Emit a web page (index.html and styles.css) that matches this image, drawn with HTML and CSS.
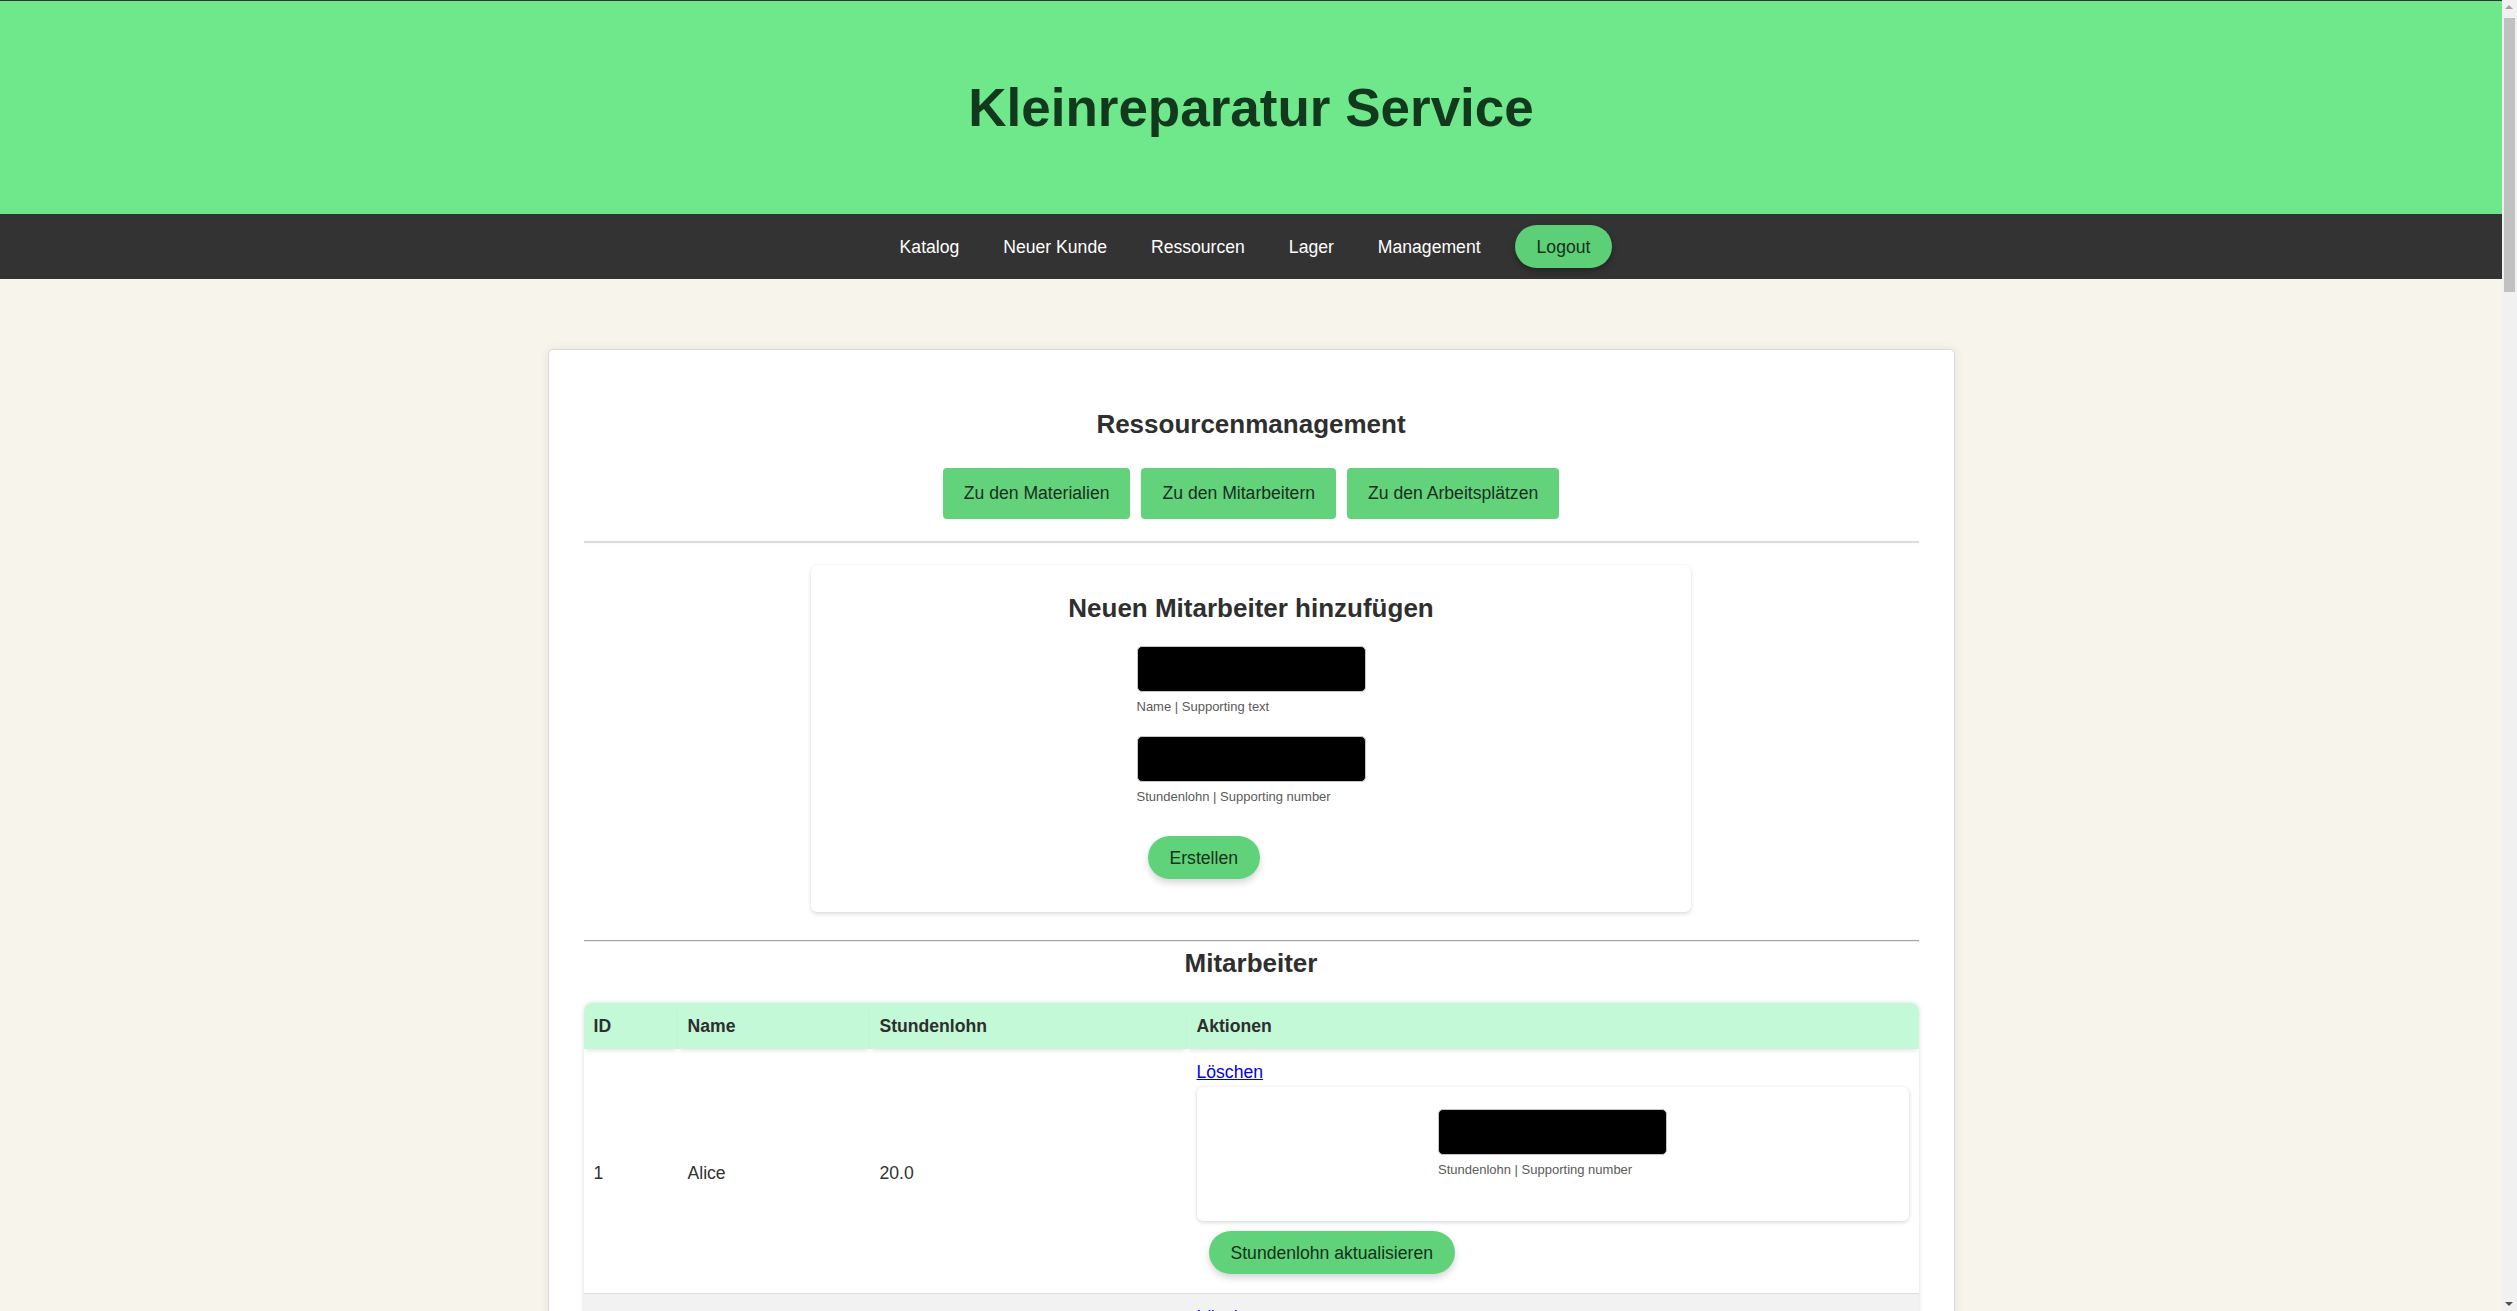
FILE: index.html
```html
<!DOCTYPE html>
<html lang="de">
<head>
<meta charset="utf-8">
<title>Kleinreparatur Service – Ressourcen</title>
<link rel="stylesheet" href="styles.css">
</head>
<body>
<div class="viewport">
  <header class="site-header">
    <h1 class="site-title">Kleinreparatur Service</h1>
  </header>
  <nav class="main-nav">
    <a class="nav-link" href="#">Katalog</a>
    <a class="nav-link" href="#">Neuer Kunde</a>
    <a class="nav-link" href="#">Ressourcen</a>
    <a class="nav-link" href="#">Lager</a>
    <a class="nav-link" href="#">Management</a>
    <button class="btn-pill nav-logout" type="button">Logout</button>
  </nav>
  <main class="page">
    <section class="card">
      <h2 class="card-title">Ressourcenmanagement</h2>
      <div class="tab-buttons">
        <a class="btn-tab" href="#">Zu den Materialien</a>
        <a class="btn-tab" href="#">Zu den Mitarbeitern</a>
        <a class="btn-tab" href="#">Zu den Arbeitsplätzen</a>
      </div>
      <hr class="soft-rule">
      <div class="form-card">
        <h3 class="form-title">Neuen Mitarbeiter hinzufügen</h3>
        <form class="form-col">
          <div class="field">
            <input class="field-input" type="text">
            <span class="field-hint">Name | Supporting text</span>
          </div>
          <div class="field">
            <input class="field-input" type="text">
            <span class="field-hint">Stundenlohn | Supporting number</span>
          </div>
          <button class="btn-pill btn-create" type="button">Erstellen</button>
        </form>
      </div>
      <hr class="plain-rule">
      <h2 class="card-title list-title">Mitarbeiter</h2>
      <table class="data-table">
        <thead>
          <tr>
            <th class="col-id">ID</th>
            <th class="col-name">Name</th>
            <th class="col-wage">Stundenlohn</th>
            <th class="col-actions">Aktionen</th>
          </tr>
        </thead>
        <tbody>
          <tr><td>1</td><td>Alice</td><td>20.0</td><td class="cell-actions"><a class="link-delete" href="#">Löschen</a><form class="row-form"><div class="row-card"><div class="field field-center"><input class="field-input" type="text"><span class="field-hint">Stundenlohn | Supporting number</span></div></div><button class="btn-pill btn-update" type="button">Stundenlohn aktualisieren</button></form></td></tr>
          <tr><td>2</td><td>Bob</td><td>18.5</td><td class="cell-actions"><a class="link-delete" href="#">Löschen</a><form class="row-form"><div class="row-card"><div class="field field-center"><input class="field-input" type="text"><span class="field-hint">Stundenlohn | Supporting number</span></div></div><button class="btn-pill btn-update" type="button">Stundenlohn aktualisieren</button></form></td></tr>
        </tbody>
      </table>
    </section>
  </main>
</div>
<div class="scrollbar" aria-hidden="true">
  <span class="scrollbar-arrow scrollbar-arrow-up"></span>
  <span class="scrollbar-thumb"></span>
  <span class="scrollbar-arrow scrollbar-arrow-down"></span>
</div>
</body>
</html>
```

FILE: styles.css
```css
* {
  box-sizing: border-box;
}

html,
body {
  margin: 0;
  padding: 0;
}

body {
  background: #f7f4ec;
  color: #333333;
  font-family: "Liberation Sans", Arial, sans-serif;
  font-size: 17.6px;
  line-height: 20px;
  height: 1311px;
  overflow: hidden;
}

.viewport {
  margin-right: 15px;
  border-top: 1px solid #333333;
}

/* ---------- fake browser scrollbar ---------- */
.scrollbar {
  position: fixed;
  top: 0;
  right: 0;
  width: 15px;
  height: 1311px;
  background: #f1f1f1;
}

.scrollbar-thumb {
  position: absolute;
  top: 18px;
  left: 2px;
  width: 11px;
  height: 274px;
  background: #c1c1c1;
}

.scrollbar-arrow {
  position: absolute;
  left: 3px;
  width: 0;
  height: 0;
  border-left: 4.5px solid transparent;
  border-right: 4.5px solid transparent;
}

.scrollbar-arrow-up {
  top: 5px;
  border-bottom: 4px solid #a3a3a3;
}

.scrollbar-arrow-down {
  bottom: 5px;
  border-top: 4px solid #505050;
}

/* ---------- header ---------- */
.site-header {
  height: 213px;
  background: #6fe88b;
  display: flex;
  align-items: center;
  justify-content: center;
}

.site-title {
  margin: 0;
  font-size: 53px;
  line-height: 61px;
  font-weight: bold;
  color: #12381d;
}

/* ---------- nav ---------- */
.main-nav {
  height: 65px;
  background: #333333;
  display: flex;
  align-items: center;
  justify-content: center;
}

.nav-link {
  padding: 0 22px;
  color: #ffffff;
  text-decoration: none;
  font-size: 17.6px;
  line-height: 20px;
}

.btn-pill {
  display: block;
  border: none;
  border-radius: 22px;
  background: #5fd27a;
  color: #16301d;
  font-family: "Liberation Sans", Arial, sans-serif;
  font-size: 17.6px;
  line-height: 20px;
  height: 43px;
  padding: 0 22px;
  box-shadow: 0 4px 7px rgba(0, 0, 0, 0.16);
  cursor: pointer;
}

.nav-logout {
  margin: 0 12px;
  background: #5ccf77;
  box-shadow: 0 3px 6px rgba(0, 0, 0, 0.3);
}

/* ---------- page card ---------- */
.page {
  padding: 70px 0 70px;
}

.card {
  width: 1407px;
  margin: 0 auto;
  background: #ffffff;
  border: 1px solid #dadada;
  border-radius: 5px;
  box-shadow: 0 0 10px rgba(0, 0, 0, 0.07);
  padding: 37px 35px 40px;
}

.card-title {
  margin: 22px 0 29px;
  text-align: center;
  font-size: 26px;
  line-height: 30px;
  font-weight: bold;
  color: #2f2f2f;
}

.tab-buttons {
  display: flex;
  justify-content: center;
  gap: 11px;
}

.btn-tab {
  display: block;
  height: 51px;
  padding: 15px 21px 16px;
  background: #62d37b;
  color: #1a2e1f;
  text-decoration: none;
  border-radius: 4px;
  font-size: 17.6px;
  line-height: 20px;
}

.soft-rule {
  margin: 22px 0;
  height: 2px;
  border: none;
  background: #dcdcdc;
  box-shadow: 0 0 10px rgba(0, 0, 0, 0.05);
}

.plain-rule {
  margin: 28px 0 0;
  height: 2px;
  border: none;
  border-top: 1px solid #a3a3a3;
  border-bottom: 1px solid #eeeeee;
}

/* ---------- create form ---------- */
.form-card {
  width: 880px;
  margin: 0 auto;
  background: #ffffff;
  border-radius: 6px;
  box-shadow: 0 2px 4px rgba(0, 0, 0, 0.13), 0 0 2px rgba(0, 0, 0, 0.05);
  padding: 22px 0;
}

.form-title {
  margin: 6px 0 23px;
  text-align: center;
  font-size: 26px;
  line-height: 30px;
  font-weight: bold;
  color: #2f2f2f;
}

.form-col {
  width: 229px;
  margin: 0 auto;
  display: flex;
  flex-direction: column;
  align-items: flex-start;
}

.field {
  width: 229px;
  margin-bottom: 22px;
}

.field-center {
  margin-left: auto;
  margin-right: auto;
}

.field-input {
  display: block;
  width: 229px;
  height: 46px;
  margin: 0 0 7px;
  background: #000000;
  border: 1px solid #c4c4c4;
  border-radius: 5px;
  color: #ffffff;
  font-size: 17.6px;
  padding: 0 12px;
}

.field-hint {
  display: block;
  font-size: 13px;
  line-height: 15px;
  color: #5a5a5a;
}

.btn-create {
  margin: 10px 11px 11px;
}

/* ---------- table ---------- */
.list-title {
  margin: 6px 0 25px;
}

.data-table {
  width: 100%;
  table-layout: fixed;
  border-collapse: separate;
  border-spacing: 0;
  border-radius: 8px 8px 0 0;
  overflow: hidden;
  box-shadow: 0 0 5px rgba(0, 0, 0, 0.14);
}

.data-table th {
  background: #c3f9d7;
  text-align: left;
  font-weight: bold;
  color: #2e2e2e;
  padding: 13px 10px;
  line-height: 20px;
  box-shadow: 0 4px 4px -2px rgba(0, 0, 0, 0.1);
}

.col-id {
  width: 94px;
}

.col-name {
  width: 192px;
}

.col-wage {
  width: 317px;
}

.data-table td {
  padding: 13px 10px 9px;
  vertical-align: middle;
  border-bottom: 1px solid #dddddd;
  color: #333333;
}

.data-table tbody tr:nth-child(even) td {
  background: #f2f2f2;
}

.data-table td.cell-actions {
  vertical-align: top;
}

.link-delete {
  display: block;
  width: max-content;
  color: #0000ee;
  text-decoration: underline;
}

.row-form {
  margin: 5px 0 0;
  display: flex;
  flex-direction: column;
  align-items: flex-start;
}

.row-card {
  align-self: stretch;
  background: #ffffff;
  border-radius: 6px;
  box-shadow: 0 1px 4px rgba(0, 0, 0, 0.18);
  padding: 22px 0;
}

.btn-update {
  margin: 10px 12px;
}
```
